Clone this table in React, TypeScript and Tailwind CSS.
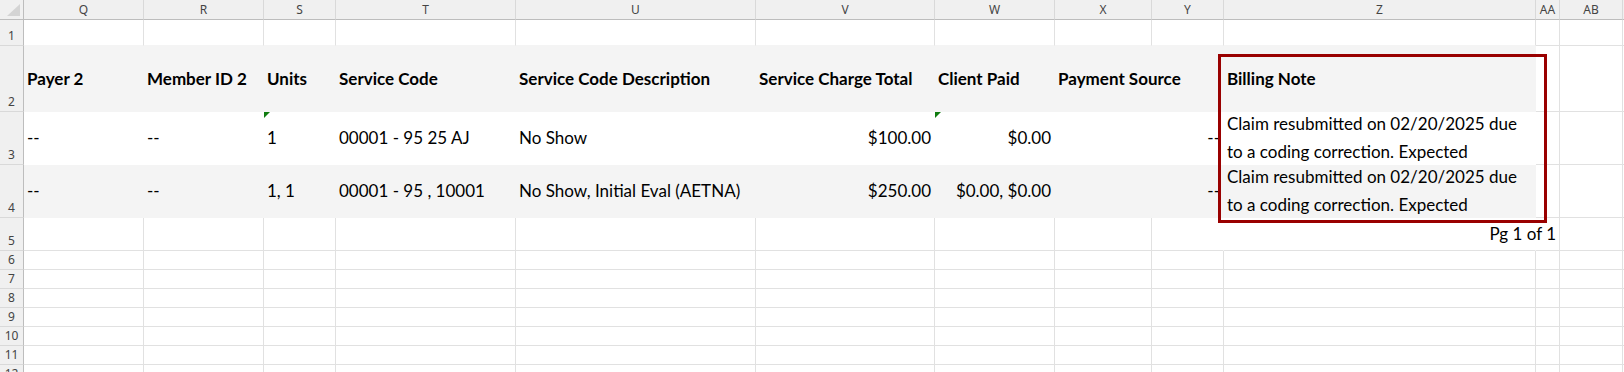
import React from 'react';

type Col = { key: string; w: string; label: string };

const cols: Col[] = [
  { key: 'Q', w: 'w-[120px]', label: 'Q' },
  { key: 'R', w: 'w-[120px]', label: 'R' },
  { key: 'S', w: 'w-[72px]', label: 'S' },
  { key: 'T', w: 'w-[180px]', label: 'T' },
  { key: 'U', w: 'w-[240px]', label: 'U' },
  { key: 'V', w: 'w-[179px]', label: 'V' },
  { key: 'W', w: 'w-[120px]', label: 'W' },
  { key: 'X', w: 'w-[97px]', label: 'X' },
  { key: 'Y', w: 'w-[72px]', label: 'Y' },
  { key: 'Z', w: 'w-[312px]', label: 'Z' },
  { key: 'AA', w: 'w-[24px]', label: 'AA' },
  { key: 'AB', w: 'w-[63px]', label: 'AB' },
  { key: 'AC', w: 'w-[60px]', label: '' },
];

const GRID = 'border-r border-b border-[#e1e1e1]';
const FILLED = 'bg-[#f4f4f4] border-r border-b border-[#f4f4f4]';
const WHITEFILL = 'bg-white border-r border-b border-white';

type CellSpec = {
  text?: React.ReactNode;
  align?: 'left' | 'right';
  bold?: boolean;
  flag?: boolean;
  note?: boolean;
};

const note = (
  <div className="-mt-[2px] pl-[3px] leading-[28px] whitespace-nowrap">
    <div>Claim resubmitted on 02/20/2025 due</div>
    <div>to a coding correction. Expected</div>
  </div>
);

const headerRow: CellSpec[] = [
  { text: 'Payer 2', bold: true },
  { text: 'Member ID 2', bold: true },
  { text: 'Units', bold: true },
  { text: 'Service Code', bold: true },
  { text: 'Service Code Description', bold: true },
  { text: 'Service Charge Total', bold: true },
  { text: 'Client Paid', bold: true },
  { text: 'Payment Source', bold: true },
  {},
  { text: 'Billing Note', bold: true },
];

const row3: CellSpec[] = [
  { text: '--' },
  { text: '--' },
  { text: '1', flag: true },
  { text: '00001 - 95 25 AJ' },
  { text: 'No Show' },
  { text: '$100.00', align: 'right' },
  { text: '$0.00', align: 'right', flag: true },
  {},
  { text: '--', align: 'right' },
  { note: true },
];

const row4: CellSpec[] = [
  { text: '--' },
  { text: '--' },
  { text: '1, 1' },
  { text: '00001 - 95 , 10001' },
  { text: 'No Show, Initial Eval (AETNA)' },
  { text: '$250.00', align: 'right' },
  { text: '$0.00, $0.00', align: 'right' },
  {},
  { text: '--', align: 'right' },
  { note: true },
];

function Flag() {
  return (
    <svg className="absolute left-0 top-0 z-[2]" width="6" height="6" viewBox="0 0 6 6">
      <polygon points="0,0 6,0 0,6" fill="#107c10" />
    </svg>
  );
}

function RowHeader({ label, h }: { label: string; h: string }) {
  return (
    <div
      className={`${h} w-[24px] shrink-0 bg-[#f0f0f0] border-r border-r-[#bdbdbd] border-b border-b-[#d9d9d9] flex items-end justify-center pb-[3px] text-[12px] leading-[12px] text-[#444] [font-family:'Noto_Sans',sans-serif]`}
    >
      {label}
    </div>
  );
}

function DataCell({ spec, col, style }: { spec: CellSpec; col: Col; style: string }) {
  if (spec.note) {
    return (
      <div className={`${col.w} shrink-0 overflow-hidden ${style}`}>{note}</div>
    );
  }
  const justify = spec.align === 'right' ? 'justify-end pr-[3px]' : 'justify-start pl-[3px]';
  return (
    <div className={`${col.w} shrink-0 flex items-center ${justify} ${spec.flag ? 'relative' : ''} ${style}`}>
      {spec.flag && <Flag />}
      {spec.text !== undefined && (
        <span className={`relative z-[1] whitespace-nowrap ${spec.bold ? 'font-bold' : ''}`}>{spec.text}</span>
      )}
    </div>
  );
}

function TableRow({
  label,
  h,
  specs,
  fill,
}: {
  label: string;
  h: string;
  specs: CellSpec[];
  fill: string;
}) {
  return (
    <div className={`flex ${h}`}>
      <RowHeader label={label} h={h} />
      {cols.map((c, i) => (
        <DataCell key={c.key} col={c} spec={i < 10 ? specs[i] : {}} style={i < 10 ? fill : GRID} />
      ))}
    </div>
  );
}

function EmptyRow({ label, h }: { label: string; h: string }) {
  return (
    <div className={`flex ${h}`}>
      <RowHeader label={label} h={h} />
      {cols.map((c) => (
        <div key={c.key} className={`${c.w} shrink-0 ${GRID}`} />
      ))}
    </div>
  );
}

export default function App() {
  return (
    <div className="relative w-[1624px] h-[372px] overflow-hidden bg-white text-black [font-family:Lato,sans-serif] text-[17px]">
      {/* column headers */}
      <div className="flex h-[20px]">
        <div className="relative w-[24px] h-[20px] shrink-0 bg-[#f0f0f0] border-r border-b border-[#bdbdbd]">
          <svg className="absolute right-[3px] bottom-[3px]" width="13" height="12" viewBox="0 0 13 12">
            <polygon points="13,0 13,12 0,12" fill="#d4d4d4" />
          </svg>
        </div>
        {cols.map((c) => (
          <div
            key={c.key}
            className={`${c.w} shrink-0 bg-[#f0f0f0] border-r border-r-[#d9d9d9] border-b border-b-[#bdbdbd] flex items-center justify-center text-[12px] text-[#444] [font-family:'Noto_Sans',sans-serif]`}
          >
            {c.label}
          </div>
        ))}
      </div>

      {/* row 1 */}
      <div className="flex h-[26px]">
        <RowHeader label="1" h="h-[26px]" />
        {cols.map((c, i) => (
          <div
            key={c.key}
            className={`${c.w} shrink-0 ${
              i < 10 ? 'border-r border-b border-r-[#e1e1e1] border-b-[#f4f4f4]' : GRID
            }`}
          />
        ))}
      </div>

      <TableRow label="2" h="h-[66px]" specs={headerRow} fill={FILLED} />
      <TableRow label="3" h="h-[53px]" specs={row3} fill={WHITEFILL} />
      <TableRow label="4" h="h-[53px]" specs={row4} fill={FILLED} />

      {/* row 5 with page label */}
      <div className="flex h-[33px]">
        <RowHeader label="5" h="h-[33px]" />
        {cols.map((c) => {
          const hide = c.key === 'Y' || c.key === 'Z';
          if (c.key === 'AA') {
            return (
              <div
                key={c.key}
                className={`${c.w} shrink-0 flex items-start justify-end pr-[3px] pt-[3px] ${GRID}`}
              >
                <span className="relative z-[1] whitespace-nowrap">Pg 1 of 1</span>
              </div>
            );
          }
          return (
            <div
              key={c.key}
              className={`${c.w} shrink-0 ${
                hide ? 'border-r border-b border-r-white border-b-[#e1e1e1]' : GRID
              }`}
            />
          );
        })}
      </div>

      <EmptyRow label="6" h="h-[19px]" />
      <EmptyRow label="7" h="h-[19px]" />
      <EmptyRow label="8" h="h-[19px]" />
      <EmptyRow label="9" h="h-[19px]" />
      <EmptyRow label="10" h="h-[19px]" />
      <EmptyRow label="11" h="h-[19px]" />
      <EmptyRow label="12" h="h-[19px]" />

      {/* highlight box */}
      <div className="absolute z-[5] left-[1218px] top-[54px] w-[329px] h-[169px] border-[3px] border-[#990000]" />
    </div>
  );
}
